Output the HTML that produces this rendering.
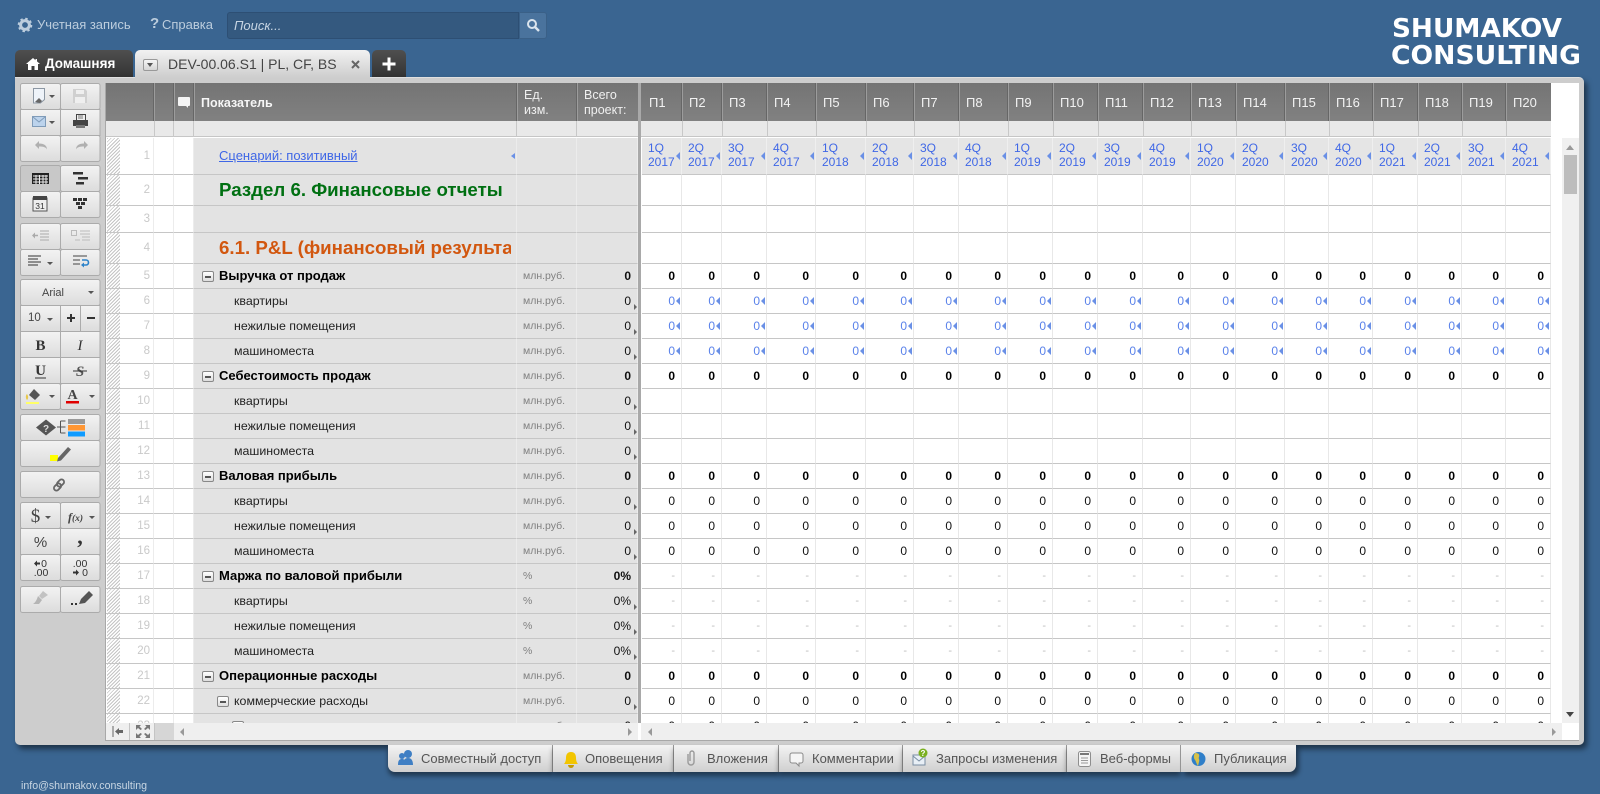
<!DOCTYPE html>
<html lang="ru"><head><meta charset="utf-8"><title>DEV-00.06.S1</title>
<style>
*{box-sizing:border-box}
html,body{margin:0;width:1600px;height:794px;overflow:hidden;background:#3a6591;font-family:"Liberation Sans",Arial,sans-serif}
.a{position:absolute}
.top{font-size:13px;color:#bccddd;line-height:16px;white-space:nowrap}
#panel{left:15px;top:77px;width:1569px;height:668px;background:#cdcdcd;border-radius:0 5px 5px 5px;box-shadow:3px 4px 6px rgba(0,0,0,.5);border-top:1px solid #e0e0e0}
#sheet{left:105px;top:83px;width:1474px;height:658px;background:#fff;border-left:1px solid #a8a8a8;border-bottom:1px solid #a8a8a8}
.hd{top:83px;height:38px;background:linear-gradient(#747474,#818181);color:#f4f4f4;font-size:13px}
.hv{top:83px;width:2px;height:38px;background:#9c9c9c;border-left:1px solid #666}
.fr{top:121px;height:17px;background:#e9e9e9;border-bottom:1px solid #fff;box-shadow:inset 0 -1px #c6c6c6}
.fv{top:121px;width:1px;height:16px;background:#c8c8c8}
table{border-collapse:separate;border-spacing:0;table-layout:fixed;position:absolute;left:0;top:0}
td{padding:0;border-bottom:1px solid #c6c6c6;overflow:hidden;white-space:nowrap;position:relative;vertical-align:middle}
#lw{left:106px;top:138px;width:532px;height:585px;overflow:hidden}
#lw table{width:532px;font-size:12.4px;color:#222}
#lw td{background:#e3e3e3;border-right:1px solid #ececec;padding-bottom:1px}
#lw td:nth-child(1){background:repeating-linear-gradient(135deg,#c4c4c4 0 1px,#fff 1px 2.5px) no-repeat 1px 0/13px 100%,#fff;text-align:right;padding-right:3px;color:#c9c9c9;font-size:11.5px;border-right:1px solid #ececec;font-weight:normal}
#lw td:nth-child(2),#lw td:nth-child(3){background:#fff}
#lw td.u{color:#808080;font-size:10.5px;padding-left:6px}
#lw td.t{text-align:right;padding-right:6px;color:#111;font-size:12px}
#lw td.x::after{content:"";position:absolute;right:0;bottom:3px;border-left:3px solid #666;border-top:3px solid transparent;border-bottom:3px solid transparent}
#lw tr.b td{font-weight:bold}
#lw tr.b td:nth-child(1){font-weight:normal}
#lw tr.b td.m{font-size:13px;color:#000;padding-left:25px}
#lw tr.b td.u{font-weight:normal}
#lw td.m{padding-left:25px}
#lw td.s{padding-left:40px}
#lw td.m.o{padding-left:25px;font-weight:bold;font-size:18.7px}
#lw td.m.o span{display:inline-block;width:292px;overflow:hidden;vertical-align:middle}
.c{display:inline-block;width:12px;height:11px;border:1px solid #888;border-radius:2px;background:linear-gradient(#fff,#ddd);position:absolute;left:8px;top:6.5px}
.c::after{content:"";position:absolute;left:2px;top:4px;width:6px;height:2px;background:#555}
.tl{position:absolute;border-right:4px solid #6a90e6;border-top:3.5px solid transparent;border-bottom:3.5px solid transparent}
#rw{left:642px;top:138px;width:909px;height:585px;overflow:hidden}
#rw table{width:909px;font-size:12px;color:#111}
#rw td{text-align:right;padding:0 6px 1px 0;border-right:1px solid #e8e8e8;background:#fff}
#rw tr.q td{background:#e5e5e5;text-align:left;padding:0 0 1px 6px;color:#3f67e6;line-height:13.5px;border-right:1px solid #efefef}
#rw tr.q td::after,#rw tr.l td::after{content:"";position:absolute;right:1px;top:50%;margin-top:-4px;border-right:4px solid #6a90e6;border-top:4px solid transparent;border-bottom:4px solid transparent}
#rw tr.b td{font-weight:bold;color:#000}
#rw tr.l td{color:#5a82ea}
#rw tr.d td{color:#bdbdbd;font-size:11px}
.bt{top:745px;height:27px;font-size:13px;color:#555;line-height:27px;white-space:nowrap;background:linear-gradient(#f3f3f3,#cfcfcf);border-right:1px solid #9a9a9a}
</style></head><body>

<svg class="a" style="left:17px;top:17px" width="16" height="16" viewBox="0 0 16 16"><circle cx="8" cy="8" r="4.4" fill="none" stroke="#bccddd" stroke-width="3"/><circle cx="8" cy="8" r="6.2" fill="none" stroke="#bccddd" stroke-width="2.2" stroke-dasharray="2.4 2.47"/></svg>
<div class="a top" style="left:37px;top:17px">Учетная запись</div>
<div class="a top" style="left:150px;top:16px;font-weight:bold;font-size:15px">?</div>
<div class="a top" style="left:162px;top:17px">Справка</div>
<div class="a" style="left:227px;top:12px;width:292px;height:27px;background:#34597f;border:1px solid #2d4f74;border-radius:3px 0 0 3px;font:italic 13px 'Liberation Sans',sans-serif;color:#c7d5e3;line-height:25px;padding-left:6px">Поиск...</div>
<div class="a" style="left:519px;top:12px;width:28px;height:27px;background:#4a739d;border:1px solid #3a6087;border-radius:0 3px 3px 0"></div>
<svg class="a" style="left:526px;top:18px" width="15" height="15" viewBox="0 0 15 15"><circle cx="6" cy="6" r="4" fill="none" stroke="#dbe5ee" stroke-width="2"/><path d="M9 9l4 4" stroke="#dbe5ee" stroke-width="2.4"/></svg>

<svg class="a" style="left:1385px;top:10px" width="205" height="62"><g font-family="DejaVu Sans,Liberation Sans,sans-serif" font-weight="bold" font-size="26" fill="#fff"><text x="7" y="27" textLength="170" lengthAdjust="spacingAndGlyphs">SHUMAKOV</text><text x="6" y="54" textLength="190" lengthAdjust="spacingAndGlyphs">CONSULTING</text></g></svg>

<div class="a" style="left:15px;top:50px;width:118px;height:27px;background:linear-gradient(#4f4f4f,#333);border-radius:5px 5px 0 0"></div>
<svg class="a" style="left:26px;top:58px" width="14" height="12" viewBox="0 0 14 12"><path d="M7 0L0 6h2v6h3.500V8h3v4H12V6h2L11 3.400V1H9.500v1.200z" fill="#fff"/></svg>
<div class="a" style="left:45px;top:56px;font-size:13.5px;font-weight:bold;color:#fff;line-height:16px">Домашняя</div>
<div class="a" style="left:135px;top:50px;width:235px;height:28px;background:linear-gradient(#f2f2f2,#cdcdcd);border-radius:5px 5px 0 0;z-index:2"></div>
<div class="a" style="left:143px;top:59px;width:15px;height:12px;border:1px solid #999;border-radius:2px;background:linear-gradient(#f5f5f5,#d5d5d5);z-index:3"></div>
<div class="a" style="left:147px;top:63px;border-top:4px solid #555;border-left:3.500px solid transparent;border-right:3.500px solid transparent;z-index:3"></div>
<div class="a" style="left:168px;top:56px;font-size:14px;color:#444;line-height:16px;z-index:3;white-space:nowrap">DEV-00.06.S1 | PL, CF, BS</div>
<svg class="a" style="left:351px;top:60px;z-index:3" width="9" height="9"><path d="M1 1l7 7M8 1l-7 7" stroke="#666" stroke-width="2"/></svg>
<div class="a" style="left:372px;top:50px;width:34px;height:27px;background:linear-gradient(#4f4f4f,#333);border-radius:5px 5px 0 0"></div>
<svg class="a" style="left:382px;top:57px" width="14" height="14"><path d="M7 0.500v13M0.500 7h13" stroke="#fff" stroke-width="3"/></svg>

<div class="a" id="panel"></div>
<div class="a" id="sheet"></div>

<!-- header -->
<div class="a hd" style="left:106px;width:532px"></div>
<div class="a hd" style="left:641px;width:910px"></div>
<div class="a" style="left:638px;top:83px;width:3px;height:640px;background:#a9a9a9"></div>
<div class="a hv" style="left:153px"></div><div class="a hv" style="left:173px"></div><div class="a hv" style="left:193px"></div><div class="a hv" style="left:516px"></div><div class="a hv" style="left:576px"></div>
<div class="a hv" style="left:681px"></div><div class="a hv" style="left:721px"></div><div class="a hv" style="left:766px"></div><div class="a hv" style="left:815px"></div><div class="a hv" style="left:865px"></div><div class="a hv" style="left:913px"></div><div class="a hv" style="left:958px"></div><div class="a hv" style="left:1007px"></div><div class="a hv" style="left:1052px"></div><div class="a hv" style="left:1097px"></div><div class="a hv" style="left:1142px"></div><div class="a hv" style="left:1190px"></div><div class="a hv" style="left:1235px"></div><div class="a hv" style="left:1284px"></div><div class="a hv" style="left:1328px"></div><div class="a hv" style="left:1372px"></div><div class="a hv" style="left:1417px"></div><div class="a hv" style="left:1461px"></div><div class="a hv" style="left:1505px"></div>
<svg class="a" style="left:177px;top:96px" width="14" height="13"><path d="M2 1h10a1 1 0 0 1 1 1v7a1 1 0 0 1-1 1h-1v2l-2-2H2a1 1 0 0 1-1-1V2a1 1 0 0 1 1-1z" fill="#f4f4f4"/></svg>
<div class="a" style="left:201px;top:95px;font-size:12.5px;font-weight:bold;color:#f6f6f6;line-height:16px">Показатель</div>
<div class="a" style="left:524px;top:88px;font-size:12.500px;color:#f0f0f0;line-height:15px">Ед.<br>изм.</div>
<div class="a" style="left:584px;top:88px;font-size:12.500px;color:#f0f0f0;line-height:15px">Всего<br>проект:</div>
<div class="a" style="top:95px;left:0;width:0;height:0;font-size:13px;color:#f2f2f2;line-height:16px;white-space:nowrap">
<span class="a" style="left:649px">П1</span><span class="a" style="left:689px">П2</span><span class="a" style="left:729px">П3</span><span class="a" style="left:774px">П4</span><span class="a" style="left:823px">П5</span><span class="a" style="left:873px">П6</span><span class="a" style="left:921px">П7</span><span class="a" style="left:966px">П8</span><span class="a" style="left:1015px">П9</span><span class="a" style="left:1060px">П10</span><span class="a" style="left:1105px">П11</span><span class="a" style="left:1150px">П12</span><span class="a" style="left:1198px">П13</span><span class="a" style="left:1243px">П14</span><span class="a" style="left:1292px">П15</span><span class="a" style="left:1336px">П16</span><span class="a" style="left:1380px">П17</span><span class="a" style="left:1425px">П18</span><span class="a" style="left:1469px">П19</span><span class="a" style="left:1513px">П20</span></div>

<!-- filter row -->
<div class="a fr" style="left:106px;width:532px"></div><div class="a fr" style="left:641px;width:910px"></div>
<div class="a fv" style="left:154px"></div><div class="a fv" style="left:173px"></div><div class="a fv" style="left:193px"></div><div class="a fv" style="left:516px"></div><div class="a fv" style="left:576px"></div>
<div class="a fv" style="left:682px"></div><div class="a fv" style="left:722px"></div><div class="a fv" style="left:767px"></div><div class="a fv" style="left:816px"></div><div class="a fv" style="left:866px"></div><div class="a fv" style="left:914px"></div><div class="a fv" style="left:959px"></div><div class="a fv" style="left:1008px"></div><div class="a fv" style="left:1053px"></div><div class="a fv" style="left:1098px"></div><div class="a fv" style="left:1143px"></div><div class="a fv" style="left:1191px"></div><div class="a fv" style="left:1236px"></div><div class="a fv" style="left:1285px"></div><div class="a fv" style="left:1329px"></div><div class="a fv" style="left:1373px"></div><div class="a fv" style="left:1418px"></div><div class="a fv" style="left:1462px"></div><div class="a fv" style="left:1506px"></div>

<!-- left table -->
<div class="a" id="lw"><table>
<colgroup><col style="width:48px"><col style="width:20px"><col style="width:20px"><col style="width:323px"><col style="width:60px"><col style="width:61px"></colgroup>
<tr style="height:37px"><td>1<td><td><td class="m o" style="font-size:13px;font-weight:normal;color:#3f67e6;text-decoration:underline">Сценарий: позитивный<i class="tl" style="right:1px;top:15px"></i><td><td>
<tr style="height:31px"><td>2<td><td><td class="m o" style="color:#007012">Раздел 6. Финансовые отчеты<td><td>
<tr style="height:27px"><td>3<td><td><td class="m"><td><td>
<tr style="height:31px"><td>4<td><td><td class="m o" style="color:#d2570f"><span>6.1. P&amp;L (финансовый результат)</span><td><td>
<tr class="b" style="height:25px"><td>5<td><td><td class="m"><i class="c"></i>Выручка от продаж<td class="u">млн.руб.<td class="t">0
<tr style="height:25px"><td>6<td><td><td class="m s">квартиры<td class="u">млн.руб.<td class="t x">0
<tr style="height:25px"><td>7<td><td><td class="m s">нежилые помещения<td class="u">млн.руб.<td class="t x">0
<tr style="height:25px"><td>8<td><td><td class="m s">машиноместа<td class="u">млн.руб.<td class="t x">0
<tr class="b" style="height:25px"><td>9<td><td><td class="m"><i class="c"></i>Себестоимость продаж<td class="u">млн.руб.<td class="t">0
<tr style="height:25px"><td>10<td><td><td class="m s">квартиры<td class="u">млн.руб.<td class="t x">0
<tr style="height:25px"><td>11<td><td><td class="m s">нежилые помещения<td class="u">млн.руб.<td class="t x">0
<tr style="height:25px"><td>12<td><td><td class="m s">машиноместа<td class="u">млн.руб.<td class="t x">0
<tr class="b" style="height:25px"><td>13<td><td><td class="m"><i class="c"></i>Валовая прибыль<td class="u">млн.руб.<td class="t">0
<tr style="height:25px"><td>14<td><td><td class="m s">квартиры<td class="u">млн.руб.<td class="t x">0
<tr style="height:25px"><td>15<td><td><td class="m s">нежилые помещения<td class="u">млн.руб.<td class="t x">0
<tr style="height:25px"><td>16<td><td><td class="m s">машиноместа<td class="u">млн.руб.<td class="t x">0
<tr class="b" style="height:25px"><td>17<td><td><td class="m"><i class="c"></i>Маржа по валовой прибыли<td class="u">%<td class="t">0%
<tr style="height:25px"><td>18<td><td><td class="m s">квартиры<td class="u">%<td class="t x">0%
<tr style="height:25px"><td>19<td><td><td class="m s">нежилые помещения<td class="u">%<td class="t x">0%
<tr style="height:25px"><td>20<td><td><td class="m s">машиноместа<td class="u">%<td class="t x">0%
<tr class="b" style="height:25px"><td>21<td><td><td class="m"><i class="c"></i>Операционные расходы<td class="u">млн.руб.<td class="t">0
<tr style="height:25px"><td>22<td><td><td class="m s"><i class="c" style="left:23px"></i>коммерческие расходы<td class="u">млн.руб.<td class="t x">0
<tr style="height:25px"><td>23<td><td><td class="m s"><i class="c" style="left:38px"></i>реклама<td class="u">млн.руб.<td class="t x">0
</table></div>

<!-- right table -->
<div class="a" id="rw"><table>
<colgroup><col style="width:40px"><col style="width:40px"><col style="width:45px"><col style="width:49px"><col style="width:50px"><col style="width:48px"><col style="width:45px"><col style="width:49px"><col style="width:45px"><col style="width:45px"><col style="width:45px"><col style="width:48px"><col style="width:45px"><col style="width:49px"><col style="width:44px"><col style="width:44px"><col style="width:45px"><col style="width:44px"><col style="width:44px"><col style="width:45px"></colgroup>
<tr class="q" style="height:37px"><td>1Q<br>2017<td>2Q<br>2017<td>3Q<br>2017<td>4Q<br>2017<td>1Q<br>2018<td>2Q<br>2018<td>3Q<br>2018<td>4Q<br>2018<td>1Q<br>2019<td>2Q<br>2019<td>3Q<br>2019<td>4Q<br>2019<td>1Q<br>2020<td>2Q<br>2020<td>3Q<br>2020<td>4Q<br>2020<td>1Q<br>2021<td>2Q<br>2021<td>3Q<br>2021<td>4Q<br>2021
<tr style="height:31px"><td><td><td><td><td><td><td><td><td><td><td><td><td><td><td><td><td><td><td><td>
<tr style="height:27px"><td><td><td><td><td><td><td><td><td><td><td><td><td><td><td><td><td><td><td><td>
<tr style="height:31px"><td><td><td><td><td><td><td><td><td><td><td><td><td><td><td><td><td><td><td><td>
<tr class="b" style="height:25px"><td>0<td>0<td>0<td>0<td>0<td>0<td>0<td>0<td>0<td>0<td>0<td>0<td>0<td>0<td>0<td>0<td>0<td>0<td>0<td>0
<tr class="l" style="height:25px"><td>0<td>0<td>0<td>0<td>0<td>0<td>0<td>0<td>0<td>0<td>0<td>0<td>0<td>0<td>0<td>0<td>0<td>0<td>0<td>0
<tr class="l" style="height:25px"><td>0<td>0<td>0<td>0<td>0<td>0<td>0<td>0<td>0<td>0<td>0<td>0<td>0<td>0<td>0<td>0<td>0<td>0<td>0<td>0
<tr class="l" style="height:25px"><td>0<td>0<td>0<td>0<td>0<td>0<td>0<td>0<td>0<td>0<td>0<td>0<td>0<td>0<td>0<td>0<td>0<td>0<td>0<td>0
<tr class="b" style="height:25px"><td>0<td>0<td>0<td>0<td>0<td>0<td>0<td>0<td>0<td>0<td>0<td>0<td>0<td>0<td>0<td>0<td>0<td>0<td>0<td>0
<tr style="height:25px"><td><td><td><td><td><td><td><td><td><td><td><td><td><td><td><td><td><td><td><td>
<tr style="height:25px"><td><td><td><td><td><td><td><td><td><td><td><td><td><td><td><td><td><td><td><td>
<tr style="height:25px"><td><td><td><td><td><td><td><td><td><td><td><td><td><td><td><td><td><td><td><td>
<tr class="b" style="height:25px"><td>0<td>0<td>0<td>0<td>0<td>0<td>0<td>0<td>0<td>0<td>0<td>0<td>0<td>0<td>0<td>0<td>0<td>0<td>0<td>0
<tr style="height:25px"><td>0<td>0<td>0<td>0<td>0<td>0<td>0<td>0<td>0<td>0<td>0<td>0<td>0<td>0<td>0<td>0<td>0<td>0<td>0<td>0
<tr style="height:25px"><td>0<td>0<td>0<td>0<td>0<td>0<td>0<td>0<td>0<td>0<td>0<td>0<td>0<td>0<td>0<td>0<td>0<td>0<td>0<td>0
<tr style="height:25px"><td>0<td>0<td>0<td>0<td>0<td>0<td>0<td>0<td>0<td>0<td>0<td>0<td>0<td>0<td>0<td>0<td>0<td>0<td>0<td>0
<tr class="d" style="height:25px"><td>-<td>-<td>-<td>-<td>-<td>-<td>-<td>-<td>-<td>-<td>-<td>-<td>-<td>-<td>-<td>-<td>-<td>-<td>-<td>-<td>-
<tr class="d" style="height:25px"><td>-<td>-<td>-<td>-<td>-<td>-<td>-<td>-<td>-<td>-<td>-<td>-<td>-<td>-<td>-<td>-<td>-<td>-<td>-<td>-<td>-
<tr class="d" style="height:25px"><td>-<td>-<td>-<td>-<td>-<td>-<td>-<td>-<td>-<td>-<td>-<td>-<td>-<td>-<td>-<td>-<td>-<td>-<td>-<td>-<td>-
<tr class="d" style="height:25px"><td>-<td>-<td>-<td>-<td>-<td>-<td>-<td>-<td>-<td>-<td>-<td>-<td>-<td>-<td>-<td>-<td>-<td>-<td>-<td>-<td>-
<tr class="b" style="height:25px"><td>0<td>0<td>0<td>0<td>0<td>0<td>0<td>0<td>0<td>0<td>0<td>0<td>0<td>0<td>0<td>0<td>0<td>0<td>0<td>0
<tr style="height:25px"><td>0<td>0<td>0<td>0<td>0<td>0<td>0<td>0<td>0<td>0<td>0<td>0<td>0<td>0<td>0<td>0<td>0<td>0<td>0<td>0
<tr style="height:25px"><td>0<td>0<td>0<td>0<td>0<td>0<td>0<td>0<td>0<td>0<td>0<td>0<td>0<td>0<td>0<td>0<td>0<td>0<td>0<td>0
</table></div>

<!-- scrollbars -->
<div class="a" style="left:1562px;top:138px;width:17px;height:585px;background:#f0f0f0"></div>
<div class="a" style="left:1566px;top:145px;border-bottom:5px solid #999;border-left:4px solid transparent;border-right:4px solid transparent"></div>
<div class="a" style="left:1564px;top:155px;width:13px;height:39px;background:#bdbdbd"></div>
<div class="a" style="left:1566px;top:712px;border-top:5px solid #444;border-left:4px solid transparent;border-right:4px solid transparent"></div>
<div class="a" style="left:106px;top:723px;width:532px;height:17px;background:#efefef"></div>
<div class="a" style="left:641px;top:723px;width:921px;height:17px;background:#efefef"></div>
<div class="a" style="left:129px;top:723px;width:1px;height:17px;background:#c4c4c4"></div>
<div class="a" style="left:154px;top:723px;width:20px;height:17px;background:#d6d6d6;border-left:1px solid #c4c4c4"></div>
<svg class="a" style="left:112px;top:726px" width="12" height="11"><path d="M1 0v11" stroke="#666"/><path d="M3 5.500L7 2v2h4v3H7v2z" fill="#666"/></svg>
<svg class="a" style="left:136px;top:725px" width="14" height="13" fill="#777"><path d="M0 0h5L3.500 1.500 6 4 4.500 5 2 3 0 5zM14 0H9l1.500 1.500L8 4l1.500 1L12 3l2 2zM0 13h5L3.500 11.500 6 9 4.500 8 2 10 0 8zM14 13H9l1.500-1.500L8 9l1.500-1L12 10l2-2z"/></svg>
<div class="a" style="left:180px;top:728px;border-right:4px solid #999;border-top:4px solid transparent;border-bottom:4px solid transparent"></div>
<div class="a" style="left:628px;top:728px;border-left:4px solid #999;border-top:4px solid transparent;border-bottom:4px solid transparent"></div>
<div class="a" style="left:648px;top:728px;border-right:4px solid #999;border-top:4px solid transparent;border-bottom:4px solid transparent"></div>
<div class="a" style="left:1552px;top:728px;border-left:4px solid #999;border-top:4px solid transparent;border-bottom:4px solid transparent"></div>

<!-- toolbar -->
<svg class="a" style="left:0;top:0" width="105" height="620" viewBox="0 0 105 620">
<defs><linearGradient id="g" x1="0" y1="0" x2="0" y2="1"><stop offset="0" stop-color="#f3f3f3"/><stop offset="1" stop-color="#dcdcdc"/></linearGradient></defs>
<g fill="url(#g)" stroke="#ababab">
<rect x="20.500" y="83.500" width="40" height="26" rx="2"/><rect x="60.500" y="83.500" width="39.500" height="26" rx="2"/>
<rect x="20.500" y="109.500" width="40" height="26"/><rect x="60.500" y="109.500" width="39.500" height="26"/>
<rect x="20.500" y="135.500" width="40" height="26" rx="2"/><rect x="60.500" y="135.500" width="39.500" height="26" rx="2"/>
<rect x="20.500" y="165.500" width="40" height="26" rx="2" fill="#c8c8c8"/><rect x="60.500" y="165.500" width="39.500" height="26" rx="2"/>
<rect x="20.500" y="191.500" width="40" height="26" rx="2"/><rect x="60.500" y="191.500" width="39.500" height="26" rx="2"/>
<rect x="20.500" y="223.500" width="40" height="26" rx="2"/><rect x="60.500" y="223.500" width="39.500" height="26" rx="2"/>
<rect x="20.500" y="249.500" width="40" height="26" rx="2"/><rect x="60.500" y="249.500" width="39.500" height="26" rx="2"/>
<rect x="20.500" y="279.500" width="79.500" height="26" rx="2"/>
<rect x="20.500" y="305.500" width="40" height="26"/><rect x="60.500" y="305.500" width="20" height="26"/><rect x="80.500" y="305.500" width="19.500" height="26"/>
<rect x="20.500" y="331.500" width="40" height="26"/><rect x="60.500" y="331.500" width="39.500" height="26"/>
<rect x="20.500" y="357.500" width="40" height="26"/><rect x="60.500" y="357.500" width="39.500" height="26"/>
<rect x="20.500" y="383.500" width="40" height="26" rx="2"/><rect x="60.500" y="383.500" width="39.500" height="26" rx="2"/>
<rect x="20.500" y="414.500" width="79.500" height="26" rx="2"/><rect x="20.500" y="440.500" width="79.500" height="26" rx="2"/>
<rect x="20.500" y="471.500" width="79.500" height="26" rx="2"/>
<rect x="20.500" y="502.500" width="40" height="26" rx="2"/><rect x="60.500" y="502.500" width="39.500" height="26" rx="2"/>
<rect x="20.500" y="528.500" width="40" height="26"/><rect x="60.500" y="528.500" width="39.500" height="26"/>
<rect x="20.500" y="554.500" width="40" height="26" rx="2"/><rect x="60.500" y="554.500" width="39.500" height="26" rx="2"/>
<rect x="20.500" y="586.500" width="40" height="26" rx="2"/><rect x="60.500" y="586.500" width="39.500" height="26" rx="2"/>
</g>
<!-- carets -->
<g fill="#555"><path d="M49 95h6l-3 3zM49 121h6l-3 3zM47 262h6l-3 3zM88 291h6l-3 3zM47 318h6l-3 3zM49 395h6l-3 3zM89 395h6l-3 3zM45 516h6l-3 3zM89 516h6l-3 3z"/></g>
<!-- doc -->
<path d="M33.500 88.500h11v11l-4 3.500h-7z" fill="#eef3f9" stroke="#8c97a3"/><path d="M35 102l4-4 3 3-2 2z" fill="#666"/>
<!-- disk -->
<path d="M73 89h12l2 2v12H73z" fill="#d0d0d0"/><rect x="76" y="90" width="8" height="4" fill="#efefef"/><rect x="75" y="97" width="10" height="6" fill="#efefef"/>
<!-- envelope -->
<rect x="32.500" y="116.500" width="13" height="10" fill="#bcd3ec" stroke="#7f9bb8"/><path d="M33 117l6 5 6-5" fill="none" stroke="#7f9bb8"/>
<!-- printer -->
<rect x="76.500" y="114.500" width="9" height="6" fill="#eee" stroke="#444"/><rect x="73" y="120" width="15" height="6" fill="#444"/><rect x="76" y="125" width="9" height="3" fill="#777"/><path d="M78 116h5M78 118h5" stroke="#777"/>
<!-- undo redo -->
<path d="M35 145l4-4v2.500c5 0 8 2 8 6-1-2.500-4-3-8-3V149z" fill="#b0b0b0"/><path d="M88 145l-4-4v2.500c-5 0-8 2-8 6 1-2.500 4-3 8-3V149z" fill="#b0b0b0"/>
<!-- grid -->
<g><rect x="32" y="173" width="17" height="11" fill="#222"/><path d="M33 176h15M33 179h15M33 182h15M36 175v9M39.500 175v9M43 175v9M46 175v9" stroke="#eee" stroke-width="1"/></g>
<!-- gantt -->
<rect x="73" y="172" width="10" height="2.500" fill="#333"/><rect x="78" y="177" width="10" height="2.500" fill="#333"/><rect x="76" y="182" width="8" height="2.500" fill="#333"/>
<!-- calendar -->
<rect x="33" y="198" width="14" height="13" fill="#eee" stroke="#555"/><rect x="33" y="196" width="14" height="4" fill="#444"/><text x="40" y="209" font-size="8.500" text-anchor="middle" fill="#333" font-family="Liberation Sans">31</text>
<!-- tree -->
<path d="M73 198h4v3h-4zM78 198h4v3h-4zM83 198h4v3h-4zM76 202h4v3h-4zM81 202h4v3h-4zM78 206h4v3h-4z" fill="#333"/>
<!-- indent -->
<g stroke="#aaa"><path d="M40 231h9M40 234h9M40 237h9M40 240h9"/><path d="M33 235.500h5" stroke-width="1.500"/></g><path d="M32 235.500l3-3v6z" fill="#aaa"/>
<g stroke="#bbb" fill="none"><rect x="71.500" y="230.500" width="5" height="5"/><path d="M80 231h10M80 234h10M82 237h8M82 240h8M75 240h5"/></g>
<!-- align left -->
<path d="M28 256h13M28 259h10M28 262h13M28 265h10" stroke="#333"/><path d="M73 256h14M73 260h7M73 264h7" stroke="#444"/><path d="M82 260h4a2 2 0 0 1 0 5h-3" fill="none" stroke="#2b82c9" stroke-width="1.600"/><path d="M81 265l3-2.500v5z" fill="#2b82c9"/>
<g font-family="Liberation Sans,sans-serif" fill="#444"><text x="53" y="296" font-size="11" text-anchor="middle">Arial</text><text x="28" y="321" font-size="11.500">10</text><path d="M67 318h8M71 314v8" stroke="#333" stroke-width="2"/><path d="M87 318h8" stroke="#333" stroke-width="2"/></g>
<g font-family="Liberation Serif,serif" fill="#333"><text x="40.500" y="350" font-size="15" font-weight="bold" text-anchor="middle">B</text><text x="80" y="350" font-size="15" font-style="italic" text-anchor="middle">I</text><text x="40.500" y="375" font-size="15" font-weight="bold" text-anchor="middle">U</text><path d="M35 378h11" stroke="#333"/><text x="80" y="376" font-size="15" font-weight="bold" font-style="italic" text-anchor="middle" fill="#555">S</text><path d="M73 371h14" stroke="#333"/></g>
<path d="M29 395l5-6 6 6-5 5z" fill="#555"/><path d="M27 394c-2 2-1 5 0 6 1-1 2-3 0-6z" fill="#e8c84a"/><rect x="26" y="402" width="13" height="2" fill="#ffff66"/>
<text x="72.500" y="399" font-family="Liberation Serif,serif" font-size="14" font-weight="bold" text-anchor="middle" fill="#444">A</text><rect x="66" y="401" width="13" height="2.500" fill="#e00000"/>
<!-- conditional -->
<path d="M36 427.500l10-8 10 8-10 8z" fill="#555"/><text x="46" y="432" font-family="Liberation Sans" font-size="10" font-weight="bold" text-anchor="middle" fill="#ddd">?</text>
<path d="M57 427h3M60.500 421v12M60.500 421h5M60.500 427h5M60.500 433h5" stroke="#555" fill="none"/>
<rect x="68" y="419" width="17" height="5" fill="#999"/><rect x="68" y="425" width="17" height="5.500" fill="#ff9633"/><rect x="68" y="431.500" width="17" height="5" fill="#0f9bff"/>
<!-- highlighter -->
<rect x="50" y="455" width="8" height="6" fill="#ffff00"/><path d="M58 458l10-11 3 2.500-10 11-4 1z" fill="#666"/>
<!-- link -->
<g fill="none" stroke="#666" stroke-width="1.800"><rect x="58" y="479" width="5" height="8" rx="2.500" transform="rotate(45 60.500 483)"/><rect x="55" y="483" width="5" height="8" rx="2.500" transform="rotate(45 57.500 487)"/></g>
<g font-family="Liberation Serif,serif" fill="#444"><text x="35.500" y="522" font-size="19" text-anchor="middle">$</text><text x="68" y="521" font-size="12" font-weight="bold" font-style="italic">f<tspan font-size="9.500">(x)</tspan></text></g>
<text x="40.500" y="547" font-family="Liberation Sans,sans-serif" font-size="15" text-anchor="middle" fill="#444">%</text>
<text x="80" y="544" font-family="Liberation Serif,serif" font-size="22" font-weight="bold" text-anchor="middle" fill="#333">,</text>
<g font-family="Liberation Sans,sans-serif" font-size="10.500" fill="#333" text-anchor="middle"><text x="44" y="567">0</text><text x="41" y="576">.00</text><text x="80" y="567">.00</text><text x="85" y="576">0</text></g>
<path d="M34 563.500l3-3v2h3v2h-3v2zM79 572.500l-3-3v2h-3v2h3v2z" fill="#333"/>
<!-- brush -->
<path d="M43 591l5 4-6 4-3-3z" fill="#c2c2c2"/><path d="M38 596l4 4-3 4h-6c3-2 4-5 5-8z" fill="#b5b5b5"/>
<path d="M71 603h2v2h-2zM75 603h2v2h-2z" fill="#333"/><path d="M79 604l2-5 8-8 4 4-8 8z" fill="#555"/>
</svg>

<!-- bottom tabs -->
<div class="a bt" style="left:388px;width:165px;border-radius:0 0 0 7px;box-shadow:0 4px 5px rgba(0,0,0,.45);padding-left:33px">Совместный доступ</div>
<div class="a bt" style="left:553px;width:121px;box-shadow:0 4px 5px rgba(0,0,0,.45);padding-left:32px">Оповещения</div>
<div class="a bt" style="left:674px;width:105px;box-shadow:0 4px 5px rgba(0,0,0,.45);padding-left:33px">Вложения</div>
<div class="a bt" style="left:779px;width:124px;box-shadow:0 4px 5px rgba(0,0,0,.45);padding-left:33px">Комментарии</div>
<div class="a bt" style="left:903px;width:164px;box-shadow:0 4px 5px rgba(0,0,0,.45);padding-left:33px">Запросы изменения</div>
<div class="a bt" style="left:1067px;width:114px;box-shadow:0 4px 5px rgba(0,0,0,.45);padding-left:33px">Веб-формы</div>
<div class="a bt" style="left:1181px;width:115px;border-right:0;border-radius:0 0 7px 0;box-shadow:3px 4px 5px rgba(0,0,0,.45);padding-left:33px">Публикация</div>
<svg class="a" style="left:388px;top:745px" width="910" height="27">
<g fill="#3f7fc4"><circle cx="14" cy="11" r="3"/><circle cx="20" cy="9" r="4"/><path d="M10 20c0-4 1-6 4-6s3 2 3 6zM15 20c0-5 2-7 5-7s5 2 5 7z"/></g>
<path d="M183 7c4 0 5 3 5 6s1 5 2 6h-14c1-1 2-3 2-6s1-6 5-6z" fill="#f2c500"/><path d="M180 20h6a3 3 0 0 1-6 0z" fill="#c59a00"/>
<path d="M300 9v8a3 3 0 0 0 6 0V8a2 2 0 0 0-4 0v8" fill="none" stroke="#9a9a9a" stroke-width="1.400"/>
<path d="M404 8h9a2 2 0 0 1 2 2v6a2 2 0 0 1-2 2h-2v3l-3-3h-4a2 2 0 0 1-2-2v-6a2 2 0 0 1 2-2z" fill="#f5f5f5" stroke="#8a8a8a"/>
<rect x="525" y="10" width="12" height="10" fill="#e8eff6" stroke="#7a8ea3"/><path d="M525 11l6 5 6-5" fill="none" stroke="#7a8ea3"/><circle cx="535" cy="8" r="4.500" fill="#7ab020"/><text x="535" y="11" font-size="8" font-weight="bold" fill="#fff" text-anchor="middle" font-family="Liberation Sans">?</text>
<rect x="690.500" y="6.500" width="12" height="15" rx="2" fill="#f4f4f4" stroke="#8e8e8e"/><path d="M692 9h9" stroke="#777" stroke-width="2"/><path d="M693 13h7M693 15.500h7M693 18h7" stroke="#999"/>
<circle cx="810.500" cy="14" r="7" fill="#2f7fc9"/><path d="M807 8c3 0 5 1 4 4-1 2 1 2 0 5l-1 4c-2-3-2-5-3-6s-2-4 0-7z" fill="#d6c04a"/>
</svg>

<div class="a" style="left:21px;top:779px;font-size:10.6px;color:#c8d6e3;line-height:14px">info@shumakov.consulting</div>
</body></html>
